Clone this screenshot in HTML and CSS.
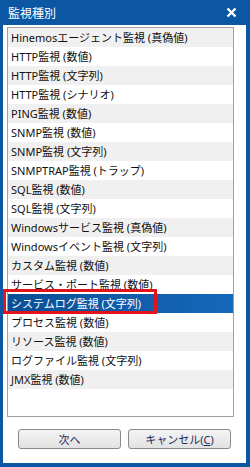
FILE: index.html
```html
<!DOCTYPE html>
<html lang="ja">
<head>
    <meta charset="UTF-8">
    <title>監視種別</title>
    <link rel="stylesheet" href="styles.css">
</head>
<body>
    <div class="window">
        <div class="titlebar">
            <span class="title">監視種別</span>
            <svg class="close" width="11" height="11" viewBox="0 0 11 11">
                <path d="M1.5 1.5 L9.5 9.5 M9.5 1.5 L1.5 9.5" stroke="#fff" stroke-width="2.4" fill="none"/>
            </svg>
        </div>
        <div class="content">
            <ul class="list">
                <li>Hinemosエージェント監視 (真偽値)</li>
                <li>HTTP監視 (数値)</li>
                <li>HTTP監視 (文字列)</li>
                <li>HTTP監視 (シナリオ)</li>
                <li>PING監視 (数値)</li>
                <li>SNMP監視 (数値)</li>
                <li>SNMP監視 (文字列)</li>
                <li>SNMPTRAP監視 (トラップ)</li>
                <li>SQL監視 (数値)</li>
                <li>SQL監視 (文字列)</li>
                <li>Windowsサービス監視 (真偽値)</li>
                <li>Windowsイベント監視 (文字列)</li>
                <li>カスタム監視 (数値)</li>
                <li>サービス・ポート監視 (数値)</li>
                <li class="selected">システムログ監視 (文字列)</li>
                <li>プロセス監視 (数値)</li>
                <li>リソース監視 (数値)</li>
                <li>ログファイル監視 (文字列)</li>
                <li>JMX監視 (数値)</li>
            </ul>
            <div class="buttons">
                <button class="btn">次へ</button>
                <button class="btn">キャンセル(<u>C</u>)</button>
            </div>
        </div>
        <div class="highlight"></div>
    </div>
</body>
</html>
```

FILE: styles.css
```css
html, body {
    margin: 0;
    padding: 0;
}

body {
    font-family: "Noto Sans", "Noto Sans CJK JP", sans-serif;
    font-size: 11px;
    color: #111;
    width: 250px;
    height: 467px;
    overflow: hidden;
}

.window {
    position: relative;
    box-sizing: border-box;
    width: 250px;
    height: 467px;
    background: #0b57a4;
    padding: 0 4px 4px 3px;
    display: flex;
    flex-direction: column;
}

.titlebar {
    height: 25px;
    display: flex;
    align-items: center;
    justify-content: space-between;
    color: #fff;
    padding: 0 9px 0 5px;
    flex-shrink: 0;
}

.title {
    font-size: 12px;
    font-family: "Noto Sans CJK JP", sans-serif;
}

.content {
    flex: 1;
    background: #fff;
    padding: 2px 12px 0 4px;
    display: flex;
    flex-direction: column;
}

.list {
    list-style: none;
    margin: 0;
    padding: 0;
    height: 390px;
    border: 1px solid #a0a0a0;
    box-sizing: border-box;
}

.list li {
    height: 19px;
    line-height: 19px;
    padding-left: 3px;
    white-space: nowrap;
    overflow: hidden;
}

.list li:nth-child(odd) {
    background: #f0f0f0;
}

.list li.selected {
    background: linear-gradient(to right, #0b4f96, #1668bb);
    color: #fff;
}

.buttons {
    display: flex;
    gap: 7px;
    padding: 12px 0 0 11px;
}

.btn {
    width: 103px;
    height: 20px;
    padding: 0;
    border: 1px solid #8a8a8a;
    border-radius: 3px;
    background: linear-gradient(#f4f4f4, #e2e2e2);
    font-family: "Noto Sans", "Noto Sans CJK JP", sans-serif;
    font-size: 11px;
    color: #1c2a5c;
}

.highlight {
    position: absolute;
    left: 3px;
    top: 289px;
    width: 154px;
    height: 25px;
    box-sizing: border-box;
    border: 3px solid #e3131b;
}
```
